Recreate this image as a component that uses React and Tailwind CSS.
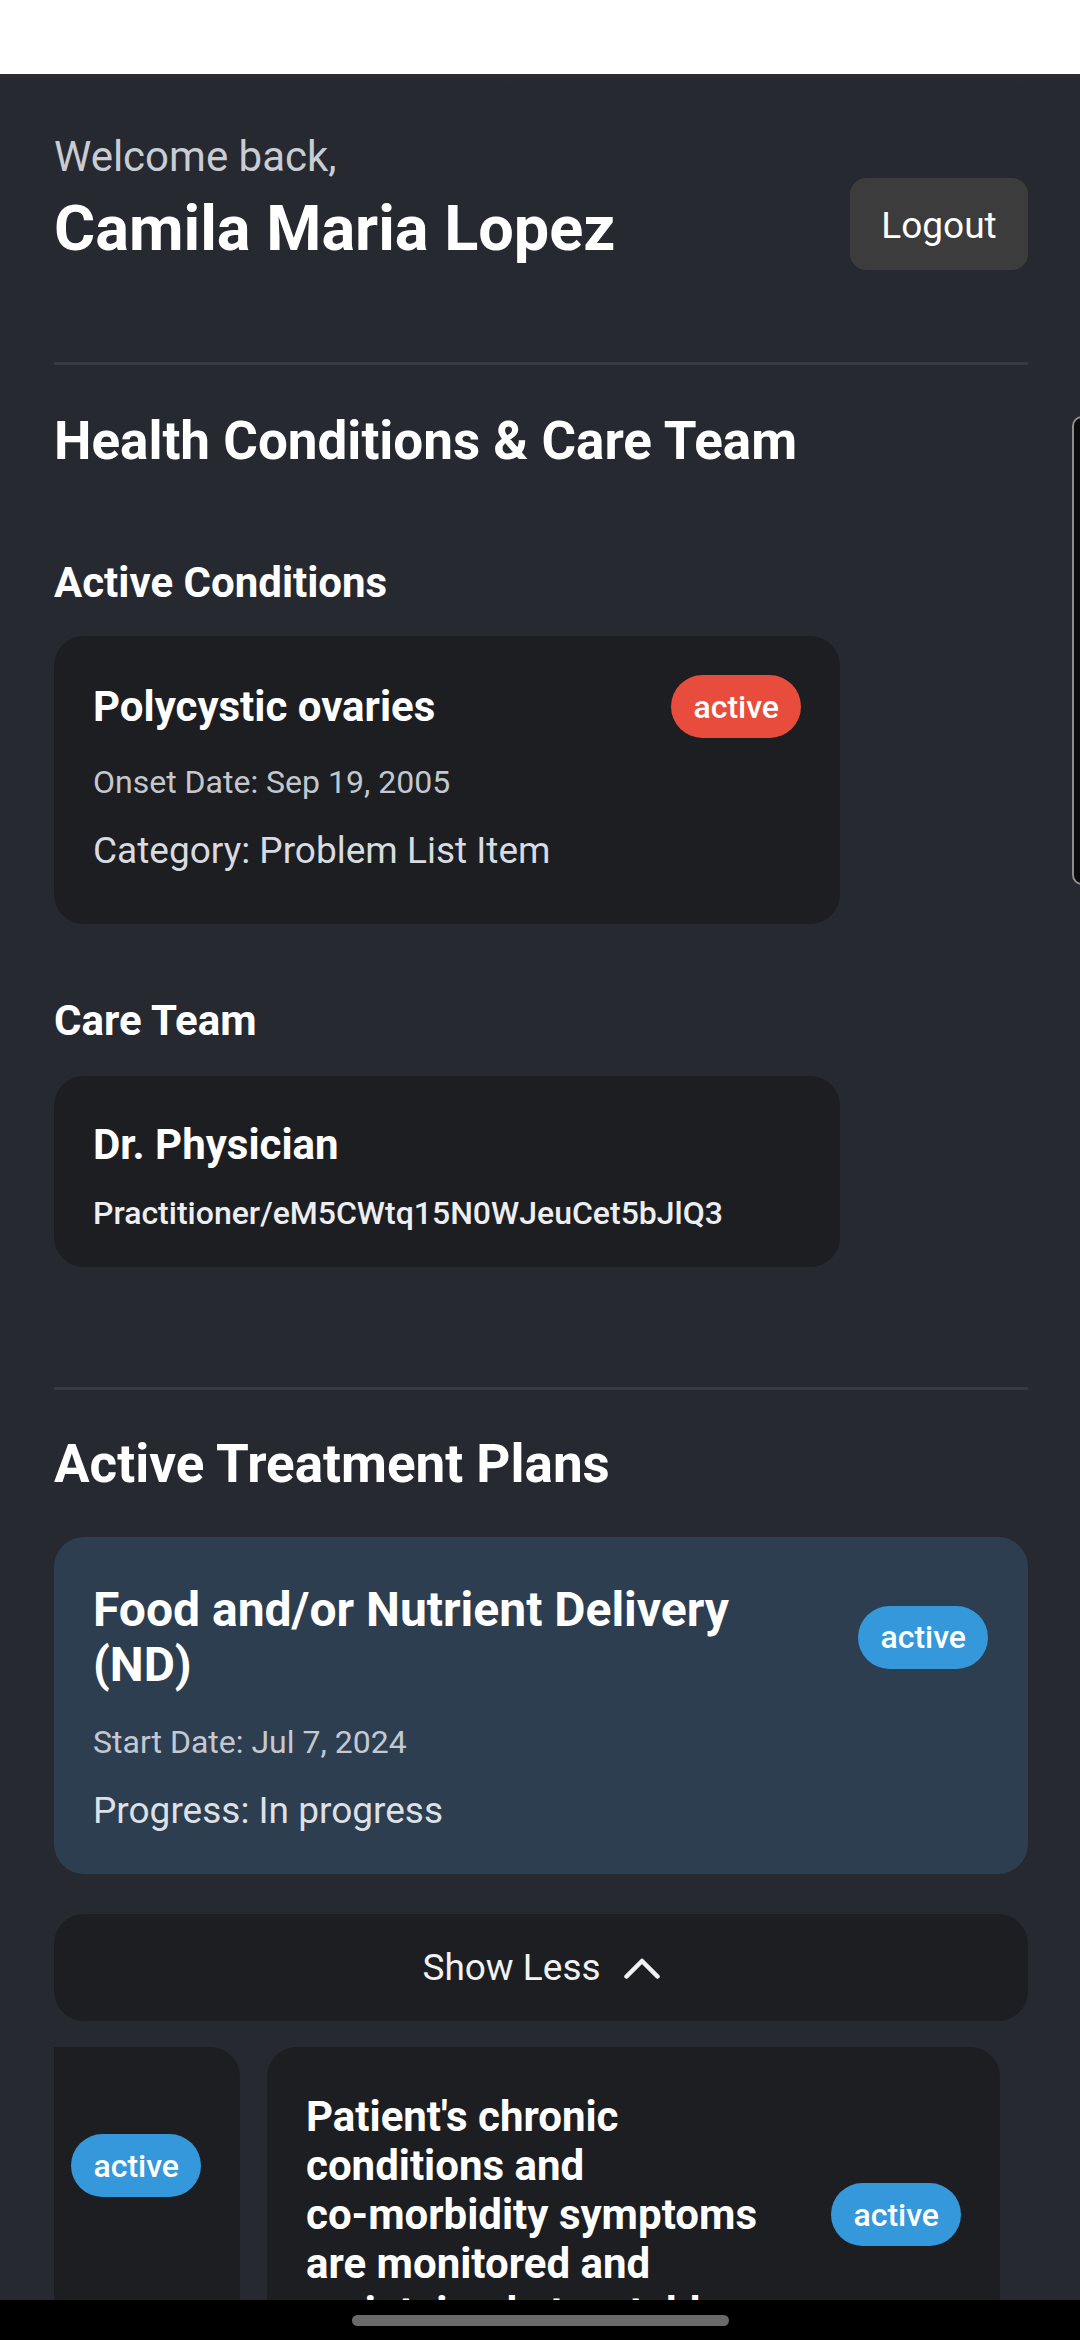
import React from 'react';

const Badge = ({ tone, children }) => (
  <span
    className={`${tone} h-[63px] px-[22px] rounded-full flex items-center shrink-0 text-[32px] font-medium text-white leading-none`}
  >
    {children}
  </span>
);

// lines: title lines; rows: height of the title block when the title is scrolled out of view
const GoalCard = ({ lines, rows }) => (
  <div className="w-[733px] shrink-0 rounded-[30px] bg-[#1c1e22] pt-[45px] pb-[40px] px-[39px]">
    <div className="flex items-center gap-[30px]">
      <div className="flex-1 text-[42px] font-bold leading-[49px] text-white" style={rows ? { height: rows * 49 } : undefined}>
        {lines.map((l, i) => (
          <div key={i}>{l}</div>
        ))}
      </div>
      <Badge tone="bg-[#3498db]">active</Badge>
    </div>
  </div>
);

const App = () => {
  return (
    <div className="relative w-[1080px] h-[2340px] flex flex-col overflow-hidden bg-[#262930] font-[Roboto,sans-serif]">
      {/* status bar */}
      <div className="h-[74px] shrink-0 bg-white" />

      <main className="relative flex-1 overflow-hidden">
        <div className="absolute top-0 left-0 right-0 h-[9px] bg-linear-to-b from-[#2c2c2d] to-transparent" />

        <div className="pl-[54px] pr-[52px] pt-[58px]">
          {/* Header */}
          <div className="flex justify-between items-start">
            <div>
              <p className="text-[42px] leading-[50px] text-[#c9cdd3]">Welcome back,</p>
              <h1 className="mt-[10px] text-[63px] leading-[74px] font-bold text-white">Camila Maria Lopez</h1>
            </div>
            <button className="mt-[46px] h-[92px] w-[178px] pt-[4px] rounded-[16px] bg-[#3c3c3c] text-[37px] text-white">
              Logout
            </button>
          </div>

          <div className="mt-[92px] h-[3px] bg-[#363940]" />

          {/* Conditions & care team */}
          <h2 className="mt-[45px] text-[53px] leading-[62px] font-bold text-white">Health Conditions &amp; Care Team</h2>

          <h3 className="mt-[86px] text-[42px] leading-[50px] font-bold text-white">Active Conditions</h3>
          <div className="mt-[28px] w-[786px] rounded-[30px] bg-[#1c1e22] pt-[39px] pb-[50px] px-[39px]">
            <div className="flex items-center justify-between">
              <span className="text-[42px] leading-[50px] font-bold text-white">Polycystic ovaries</span>
              <Badge tone="bg-[#e74c3c]">active</Badge>
            </div>
            <p className="mt-[24px] text-[32px] leading-[40px] text-[#c4c7cd]">Onset Date: Sep 19, 2005</p>
            <p className="mt-[26px] text-[37px] leading-[46px] text-[#d8dbe0]">Category: Problem List Item</p>
          </div>

          <h3 className="mt-[72px] text-[42px] leading-[50px] font-bold text-white">Care Team</h3>
          <div className="mt-[30px] w-[786px] rounded-[30px] bg-[#1c1e22] pt-[44px] pb-[34px] px-[39px]">
            <p className="text-[42px] leading-[50px] font-bold text-white">Dr. Physician</p>
            <p className="mt-[23px] text-[32px] leading-[40px] font-medium text-[#eceef1]">
              Practitioner/eM5CWtq15N0WJeuCet5bJlQ3
            </p>
          </div>

          <div className="mt-[120px] h-[3px] bg-[#363940]" />

          {/* Treatment plans */}
          <h2 className="mt-[43px] text-[53px] leading-[62px] font-bold text-white">Active Treatment Plans</h2>
          <div className="mt-[42px] rounded-[30px] bg-[#2c3e50] pt-[45px] pb-[40px] pl-[39px] pr-[40px]">
            <div className="flex items-center justify-between gap-[30px]">
              <span className="max-w-[710px] text-[48px] leading-[55px] font-bold text-white">
                Food and/or Nutrient Delivery (ND)
              </span>
              <Badge tone="bg-[#3498db]">active</Badge>
            </div>
            <p className="mt-[30px] text-[32px] leading-[40px] text-[#c4c9d1]">Start Date: Jul 7, 2024</p>
            <p className="mt-[26px] text-[37px] leading-[46px] text-[#dde1e6]">Progress: In progress</p>
          </div>

          <button className="mt-[40px] w-full h-[107px] rounded-[30px] bg-[#1c1e22] flex items-center justify-center gap-[23px] text-[37px] text-[#f2f2f2]">
            Show Less
            <svg width="36" height="22" viewBox="0 0 36 22" fill="none">
              <polyline points="2.5,19.5 18,4 33.5,19.5" stroke="#f2f2f2" strokeWidth="4.5" strokeLinecap="round" strokeLinejoin="round" />
            </svg>
          </button>

          {/* Goals carousel, scrolled part way */}
          <div className="mt-[26px] overflow-hidden">
            <div className="flex gap-[27px] ml-[-547px]">
              <GoalCard lines={[]} rows={3} />
              <GoalCard
                lines={[
                  "Patient's chronic",
                  'conditions and',
                  'co-morbidity symptoms',
                  'are monitored and',
                  'maintained at a stable',
                ]}
              />
            </div>
          </div>
        </div>

        {/* edge handle */}
        <div className="absolute top-[342px] right-[-12px] w-[20px] h-[469px] rounded-[12px] border-2 border-[#8d8d8d] bg-[#0b0b0d]" />
      </main>

      {/* nav bar */}
      <div className="h-[40px] shrink-0 bg-black flex items-center justify-center">
        <div className="w-[377px] h-[11px] rounded-full bg-[#6a6a6a]" />
      </div>
    </div>
  );
};

export default App;
